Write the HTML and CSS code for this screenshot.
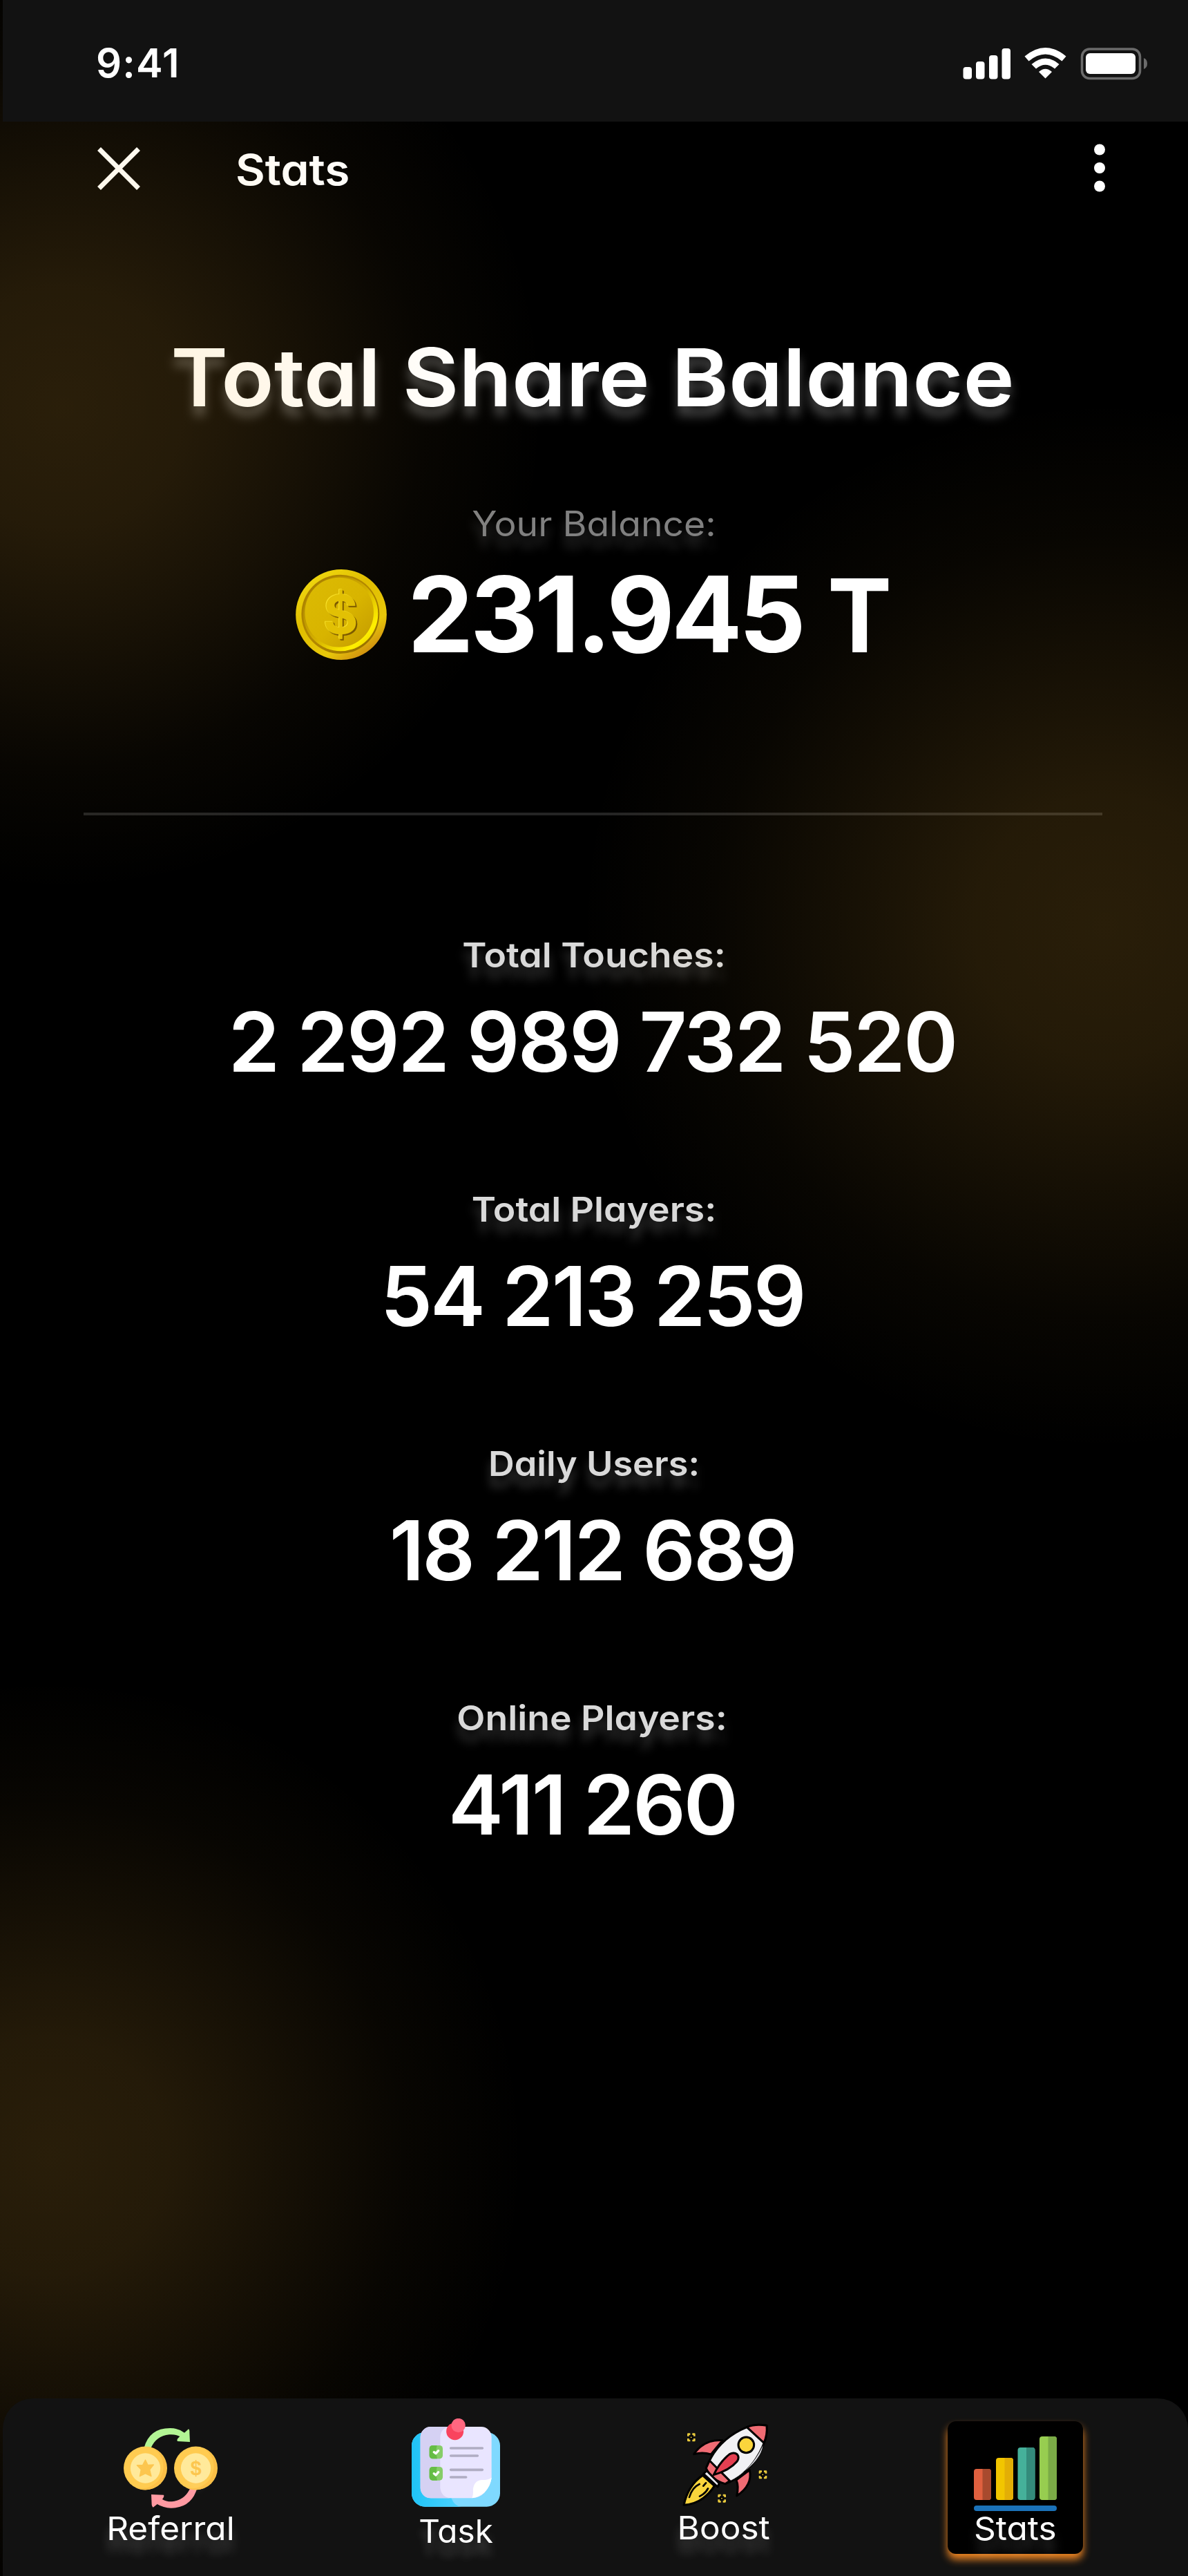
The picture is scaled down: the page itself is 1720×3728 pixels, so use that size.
FILE: index.html
```html
<!DOCTYPE html>
<html lang="en">
<head>
<meta charset="utf-8">
<title>Stats</title>
<link rel="stylesheet" href="styles.css">
</head>
<body>
<div class="screen">
  <div class="status-bar">
    <span class="time">9:41</span>
    <svg class="status-icons" viewBox="1394 64 270 56" fill="#fff">
      <rect x="1394.5" y="97" width="12.5" height="17.5" rx="4"/>
      <rect x="1413" y="89" width="12.5" height="25.500" rx="4"/>
      <rect x="1432" y="80" width="12.500" height="34.500" rx="4"/>
      <rect x="1450.500" y="70" width="12.500" height="44.500" rx="4"/>
      <path d="M1483.500 81.500Q1513.500 56.500 1543.500 81.500L1537.500 88.500Q1513.500 68.500 1489.500 88.500Z"/>
      <path d="M1493.500 93Q1513.500 76 1533.500 93L1527 99.500Q1513.500 88 1500 99.500Z"/>
      <path d="M1504 104Q1513.500 95.500 1523 104L1513.500 113.500Z"/>
      <rect x="1566.500" y="71" width="84" height="42.500" rx="11" fill="none" stroke="#6b6b6b" stroke-width="3.500"/>
      <rect x="1572" y="77" width="72" height="30" rx="6"/>
      <path d="M1656 84Q1661 86 1661 92Q1661 98 1656 100Z" fill="#6b6b6b"/>
    </svg>
  </div>

  <header class="app-bar">
    <svg class="close" viewBox="0 0 64 64"><path d="M3.500 3.500L60.500 60.500M60.500 3.500L3.500 60.500" stroke="#fff" stroke-width="7"/></svg>
    <span class="app-title">Stats</span>
    <svg class="more" viewBox="0 0 16 70" fill="#fff"><circle cx="8" cy="8.500" r="8"/><circle cx="8" cy="35" r="8"/><circle cx="8" cy="61.500" r="8"/></svg>
  </header>

  <main class="content">
    <h1 class="title">Total Share Balance</h1>
    <p class="balance-label">Your Balance:</p>
    <div class="balance">
      <svg class="coin" viewBox="55 72 395 392">
        <defs>
          <linearGradient id="rim" x1="0" y1="0" x2=".7" y2="1"><stop offset="0" stop-color="#f6e215"/><stop offset=".45" stop-color="#e0bd00"/><stop offset=".8" stop-color="#e8c80a"/><stop offset="1" stop-color="#cf8d10"/></linearGradient>
          <linearGradient id="ring" x1="0" y1="0" x2="1" y2="1"><stop offset="0" stop-color="#a87f00"/><stop offset=".5" stop-color="#b38800"/><stop offset="1" stop-color="#8f6a00"/></linearGradient>
          <linearGradient id="lip" x1="0" y1="0" x2="1" y2="1"><stop offset=".1" stop-color="#a98100"/><stop offset=".5" stop-color="#d3ae00"/><stop offset=".8" stop-color="#fff000"/><stop offset="1" stop-color="#e0c000"/></linearGradient>
          <linearGradient id="face" x1="0" y1="0" x2="1" y2="1"><stop offset="0" stop-color="#dcbb03"/><stop offset=".55" stop-color="#d8b400"/><stop offset="1" stop-color="#c39a00"/></linearGradient>
        </defs>
        <ellipse cx="252.500" cy="268" rx="197" ry="196" fill="url(#rim)"/>
        <ellipse cx="249" cy="266" rx="169" ry="171" fill="url(#ring)"/>
        <ellipse cx="250" cy="264" rx="162" ry="162" fill="url(#lip)"/>
        <ellipse cx="244" cy="258" rx="149" ry="151" fill="url(#face)"/>
        <text class="coin-sign" x="250" y="350" text-anchor="middle">$</text>
      </svg>
      <span class="balance-value">231.945 <span class="unit">T</span></span>
    </div>
    <div class="divider"></div>

    <section class="stat">
      <p class="stat-label">Total Touches:</p>
      <p class="stat-value long">2 292 989 732 520</p>
    </section>
    <section class="stat">
      <p class="stat-label">Total Players:</p>
      <p class="stat-value">54 213 259</p>
    </section>
    <section class="stat">
      <p class="stat-label daily">Daily Users:</p>
      <p class="stat-value">18 212 689</p>
    </section>
    <section class="stat">
      <p class="stat-label online">Online Players:</p>
      <p class="stat-value">411 260</p>
    </section>
  </main>

  <nav class="tab-bar">
    <a class="tab referral">
      <svg viewBox="60 72 408 348">
        <path d="M148 160Q170 72 262 72Q298 72 324 92L342 76Q347 78 346 90L348 132L294 129Q290 122 296 116L304 108Q284 98 258 100Q200 106 178 160Z" fill="#b2f594"/>
        <path d="M380 330Q356 418 266 419Q232 418 206 402L188 416Q183 414 182 404L180 360L234 362Q238 370 228 381Q246 392 270 391Q328 384 350 330Z" fill="#ff9aa2"/>
        <circle cx="154.500" cy="246" r="94.500" fill="#ffcb50"/><path d="M182 156A94.500 94.500 0 0 1 154 340Q130 340 110 329A94 94 0 0 0 182 156Z" fill="#fcbf46"/>
        <circle cx="154.500" cy="246" r="65" fill="#ffe99a"/>
        <path d="M154.500 210L165 232L190 231L173 252L180 281L154.500 269L130 281L136 252L118 233L143 232Z" fill="#fcc64f" stroke="#fcc64f" stroke-width="4" stroke-linejoin="round"/>
        <circle cx="373.500" cy="246" r="94.500" fill="#ffcb50"/><path d="M401 156A94.500 94.500 0 0 1 373 340Q349 340 329 329A94 94 0 0 0 401 156Z" fill="#fcbf46"/>
        <circle cx="373.500" cy="246" r="65" fill="#ffe99a"/>
        <text class="mini-sign" x="374.500" y="276" text-anchor="middle">$</text>
      </svg>
      <span class="tab-label">Referral</span>
    </a>
    <a class="tab task">
      <svg viewBox="48 60 384 384">
        <defs><linearGradient id="board" x1="0" x2="1"><stop offset="0" stop-color="#1fc3f6"/><stop offset="1" stop-color="#4fd3ff"/></linearGradient></defs>
        <rect x="48" y="120" width="384" height="323" rx="58" fill="#7fd9ff"/>
        <path d="M106 120H220V405Q235 443 264 443H106A58 58 0 0 1 48 385V178A58 58 0 0 1 106 120Z" fill="url(#board)"/>
        <path d="M131 96H350A45 45 0 0 1 395 141V322Q372 405 310 406H131A45 45 0 0 1 86 361V141A45 45 0 0 1 131 96Z" fill="#e9e5ff"/>
        <path d="M131 96H216Q172 100 172 145V361Q176 400 213 406H131A45 45 0 0 1 86 361V141A45 45 0 0 1 131 96Z" fill="#d5d1f3"/>
        <path d="M310 406Q316 392 315 366Q320 328 354 327Q384 327 395 317Q393 350 364 382Q341 402 310 406Z" fill="#fff"/>
        <circle cx="236" cy="116" r="37.500" fill="#f9445e"/><circle cx="251" cy="90" r="30.500" fill="#ff6780"/>
        <rect x="125" y="177" width="58" height="58" rx="14" fill="#86cd68"/><path d="M139 177H158Q151 206 159 235H139A14 14 0 0 1 125 221V191A14 14 0 0 1 139 177Z" fill="#65bd45"/>
        <rect x="125" y="270" width="58" height="59" rx="14" fill="#86cd68"/><path d="M139 270H158Q151 300 159 329H139A14 14 0 0 1 125 315V284A14 14 0 0 1 139 270Z" fill="#65bd45"/>
        <path d="M145 206L153 212L164 200M145 299L153 306L164 293" fill="none" stroke="#fff" stroke-width="10" stroke-linecap="round" stroke-linejoin="round"/>
        <path d="M218 189H355M218 222H334M218 283H355M218 315H284" stroke="#b0adc3" stroke-width="11" stroke-linecap="round"/>
      </svg>
      <span class="tab-label">Task</span>
    </a>
    <a class="tab boost">
      <svg viewBox="39 42 390 375" stroke-linejoin="round" stroke-linecap="round">
        <g stroke="#000" stroke-width="9">
          <path d="M228 125Q148 120 104 185Q142 175 178 186Z" fill="#ef6b73"/>
          <path d="M346 254Q360 320 290 366Q300 325 288 297Z" fill="#ef6b73"/>
          <path d="M420 61Q371 52 334 68Q205 120 157 246Q179 296 240 314Q350 272 403 150Q423 110 420 61Z" fill="#f1f1f4"/>
          <path d="M404 146Q390 230 257 301L240 310Q349 268 404 146Z" fill="#dcdce3" stroke="none"/>
          <path d="M420 61Q371 52 334 68L408 136Q424 100 420 61Z" fill="#ef6b73"/>
          <path d="M172 213L157 246Q179 296 240 314L260 301Z" fill="#ef6b73"/>
          <circle cx="331" cy="145" r="34" fill="#fad53c"/>
          <path d="M190 275Q217 217 259 185Q278 174 292 186Q303 200 291 217Q258 256 190 275Z" fill="#e43f51"/>
          <path d="M146 270L160 257L214 312L207 327Z" fill="#e8e8ee"/>
          <path d="M142 277L193 323Q143 400 60 406Q79 320 142 277Z" fill="#fad53c"/>
          <path d="M128 315Q96 330 84 372M156 310L145 323M165 334Q155 355 129 368" fill="none" stroke-width="8"/>
        </g>
        <g fill="none" stroke="#e8c93c" stroke-width="8" stroke-linecap="butt">
          <path id="spark" d="M88 98H79V107M97 98H106V107M79 117V126H88M106 117V126H97"/>
          <use href="#spark" x="311" y="162"/>
          <use href="#spark" x="133" y="265"/>
        </g>
        <path d="M92 105L99 112L92 119L85 112ZM403 267L410 274L403 281L396 274ZM225 370L232 377L225 384L218 377Z" fill="#e8c93c" stroke="#000" stroke-width="5"/>
      </svg>
      <span class="tab-label">Boost</span>
    </a>
    <a class="tab stats active">
      <svg viewBox="0 0 120 108">
        <g><rect y="47" width="25" height="45" rx="4" fill="#e0603f"/><path d="M12.500 47H21A4 4 0 0 1 25 51V88A4 4 0 0 1 21 92H12.500Z" fill="#a84a2e"/></g>
        <g><rect x="32" y="31" width="25" height="61" rx="4" fill="#f2c500"/><path d="M44.500 31H53A4 4 0 0 1 57 35V88A4 4 0 0 1 53 92H44.500Z" fill="#e3ae06"/></g>
        <g><rect x="63.500" y="16" width="25" height="76" rx="4" fill="#45b09a"/><path d="M76 16H84.500A4 4 0 0 1 88.500 20V88A4 4 0 0 1 84.500 92H76Z" fill="#348b7b"/></g>
        <g><rect x="95" width="25" height="92" rx="4" fill="#97cd50"/><path d="M107.500 0H116A4 4 0 0 1 120 4V88A4 4 0 0 1 116 92H107.500Z" fill="#7bab47"/></g>
        <rect y="100" width="120" height="8" rx="4" fill="#1b72b8"/>
      </svg>
      <span class="tab-label">Stats</span>
    </a>
  </nav>
</div>
</body>
</html>
```
FILE: styles.css
```css
* { box-sizing: border-box; }

body {
  margin: 0;
  background: #000;
  color: #fff;
  font-family: Inter, "Open Sans", sans-serif;
  font-feature-settings: "cv11";
}

p, h1 { margin: 0; }
svg { display: block; flex: none; }

.screen {
  position: relative;
  width: 1720px;
  height: 3728px;
  display: flex;
  flex-direction: column;
  overflow: hidden;
}

/* Warm ambient glow laid over the page content */
.screen::after {
  content: "";
  position: absolute;
  inset: 0;
  pointer-events: none;
  background:
    radial-gradient(circle 700px at 90px 590px, rgba(255,185,60,.165), rgba(255,185,60,.145) 25%, rgba(255,185,60,.09) 50%, rgba(255,185,60,.033) 75%, rgba(255,185,60,0)),
    radial-gradient(circle 760px at 1600px 1340px, rgba(255,185,55,.16), rgba(255,185,55,.14) 25%, rgba(255,185,55,.085) 50%, rgba(255,185,55,.03) 75%, rgba(255,185,55,0)),
    radial-gradient(circle 690px at 70px 3120px, rgba(255,185,60,.16), rgba(255,185,60,.14) 25%, rgba(255,185,60,.085) 50%, rgba(255,185,60,.03) 75%, rgba(255,185,60,0));
}

.status-bar {
  position: relative;
  z-index: 1;
  height: 176px;
  margin-left: 4px;
  padding: 0 56px 0 135px;
  display: flex;
  align-items: center;
  justify-content: space-between;
  background: #121212;
}
.time {
  font-size: 58px;
  line-height: 70px;
  font-weight: 600;
  letter-spacing: 1.2px;
  padding-top: 6px;
}
.status-icons { width: 270px; height: 56px; margin-top: 8px; }

.app-bar {
  height: 140px;
  padding: 0 120px 0 140px;
  display: flex;
  align-items: center;
}
.close { width: 64px; height: 64px; margin-top: -4px; }
.app-title {
  margin-left: 137px;
  font-size: 62px;
  line-height: 80px;
  font-weight: 600;
  transform: scaleX(1.062);
  transform-origin: left;
}
.more { width: 16px; height: 70px; margin: -6px 0 0 auto; }

.content {
  flex: 1;
  text-align: center;
}
.title {
  margin-top: 160px;
  font-size: 116px;
  line-height: 140px;
  font-weight: 600;
  text-shadow: 0 14px 14px rgba(255,255,255,.27);
  transform: translateX(-2px) scaleX(1.082);
}
.balance-label {
  margin-top: 112px;
  font-size: 50px;
  line-height: 60px;
  font-weight: 400;
  color: #808080;
  text-shadow: 0 16px 14px rgba(255,255,255,.2);
  transform: scaleX(1.07);
}
.balance {
  position: relative;
  z-index: 1;
  margin-top: 25px;
  height: 152px;
  padding-left: 428px;
  display: flex;
  align-items: center;
  gap: 30px;
}
.coin { width: 132px; height: 131px; }
.coin-sign {
  font-size: 232px;
  font-weight: 700;
  fill: #e2c004;
  filter: drop-shadow(-3px -2px 1px #fbe52e) drop-shadow(6px 6px 2px #7d5b00);
}
.balance-value {
  font-size: 152px;
  line-height: 152px;
  font-weight: 700;
  letter-spacing: -5px;
  word-spacing: 5px;
}
.unit { display: inline-block; font-size: 147px; line-height: 1; transform: scaleX(.95); transform-origin: left; }
.divider {
  height: 4px;
  margin: 211px 124px 0 121px;
  background: rgba(255,255,255,.14);
}

.stat { padding-top: 142px; }
.divider + .stat { padding-top: 172px; }
.stat-label {
  font-size: 50px;
  line-height: 60px;
  font-weight: 600;
  color: #d9d9d9;
  text-shadow: 0 16px 14px rgba(255,255,255,.22);
  transform: scaleX(1.07);
}
.stat-label.daily { transform: scaleX(1.045); }
.stat-label.online { transform: translateX(-3px) scaleX(1.07); }
.stat-value {
  position: relative;
  z-index: 1;
  margin-top: 26px;
  padding-right: 5px;
  font-size: 120px;
  line-height: 140px;
  font-weight: 600;
  letter-spacing: -3.1px;
}
.stat-value.long { letter-spacing: -2.7px; }

.tab-bar {
  position: relative;
  z-index: 1;
  height: 257px;
  margin-left: 4px;
  padding: 0 0 0 153px;
  display: flex;
  align-items: flex-start;
  gap: 259px;
  background: #121212;
  border-radius: 44px 44px 0 0;
}
.tab {
  display: flex;
  flex-direction: column;
  align-items: center;
  font-size: 47px;
  line-height: 60px;
  white-space: nowrap;
  text-shadow: 0 18px 14px rgba(255,255,255,.22);
}
.tab-label { transform: scaleX(1.055); }
.referral { width: 180px; padding-top: 43px; }
.referral svg { width: 136px; height: 116px; margin-bottom: -1px; }
.mini-sign { font: 700 86px "Liberation Sans", sans-serif; fill: #fcc64f; }
.task { width: 128px; padding-top: 29px; }
.task svg { width: 128px; height: 128px; margin-bottom: 5px; }
.task .tab-label { transform: scaleX(1.015); }
.boost { width: 130px; padding-top: 33px; }
.boost svg { width: 130px; height: 125px; margin-bottom: -1px; }
.stats {
  width: 196px;
  height: 192px;
  margin-top: 33px;
  padding-top: 22px;
  border-radius: 12px;
}
.stats svg { width: 120px; height: 108px; margin-bottom: -5px; }
.active {
  background: #000;
  box-shadow: 0 8px 12px #ee8522;
}
```
